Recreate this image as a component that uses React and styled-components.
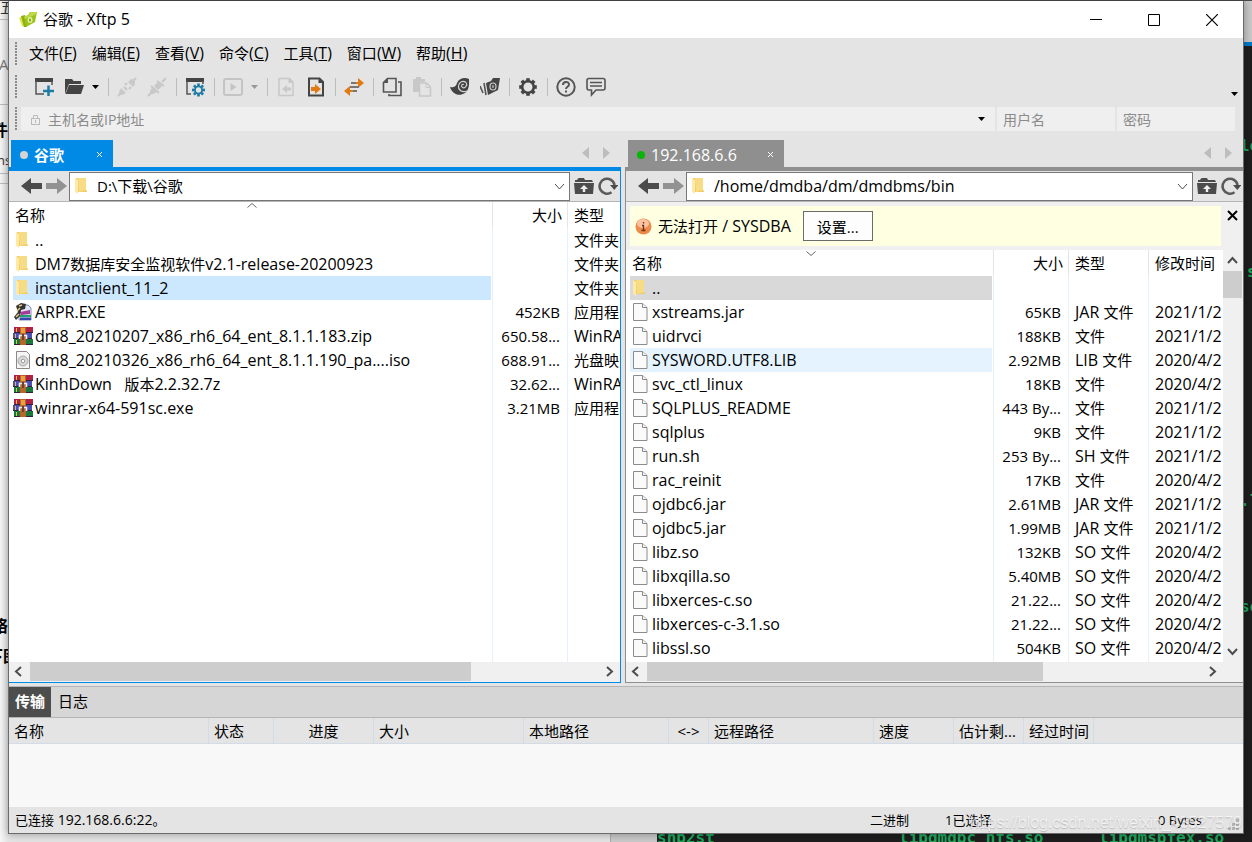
import React from "react";
import styled, { createGlobalStyle } from "styled-components";

const Global = createGlobalStyle`
  * { box-sizing: border-box; }
  body { margin: 0; font-family: "Open Sans", "Noto Sans CJK SC", sans-serif; font-size: 15px; color: #000; }
  button, input, select { font: inherit; color: inherit; border: 0; padding: 0; margin: 0; background: none; border-radius: 0; }
  svg { display: block; flex: none; }
`;

/* ---------- desktop behind the window ---------- */
const Desktop = styled.div`
  position: relative;
  height: 100vh;
  min-height: 600px;
  padding: 1px 8px 8px;
  overflow: hidden;
  background: #1e1e1e;
  isolation: isolate;
`;
const Backdrop = styled.div`
  position: absolute;
  inset: 0;
  z-index: -1;
  overflow: hidden;
`;
const Page = styled.div`
  position: absolute;
  inset: 0 auto 0 0;
  width: 610px;
  background: linear-gradient(90deg, #f6f6f6, #e4e4e4 8px);
  border-top: 1px solid #55555a;
`;
const PageEdge = styled.div`
  position: absolute;
  inset: 0 auto 0 610px;
  width: 47px;
  background: #c9c9c9;
  border-left: 1px solid #aaa;
`;
const TopStrip = styled.div`
  position: absolute;
  inset: 0 0 auto 0;
  height: 1px;
  background: #4d4b50;
`;
const CornerWindow = styled.div`
  position: absolute;
  right: 0;
  top: 1px;
  width: 9px;
  height: 45px;
  background: #c8c8c8;
  border-bottom: 4px solid #0078c8;
`;
const Scrap = styled.span`
  position: absolute;
  white-space: nowrap;
  line-height: 20px;
  left: ${(p) => p.$x}px;
  top: ${(p) => p.$y}px;
  font-size: ${(p) => p.$size || 15}px;
  font-weight: ${(p) => (p.$bold ? 700 : 400)};
  color: ${(p) => p.$color || "#333"};
`;
const Rule = styled.div`
  position: absolute;
  left: 0;
  top: ${(p) => p.$y}px;
  width: 8px;
  height: 1px;
  background: #bbb;
`;
const Term = styled.span`
  position: absolute;
  white-space: nowrap;
  font: 700 16px/20px "DejaVu Sans Mono", monospace;
  color: #1ba85b;
  left: ${(p) => p.$x}px;
  ${(p) => (p.$y ? `top: ${p.$y}px;` : "bottom: -6px;")}
`;

/* ---------- window frame ---------- */
const Window = styled.main`
  position: relative;
  display: flex;
  flex-direction: column;
  height: 100%;
  background: #e4e4e4;
  border: 1px solid #6b6b6b;
  border-top: 0;
  box-shadow: 0 0 8px rgba(0, 0, 0, 0.35);
`;
const Latin = styled.span`
  font-size: ${(p) => p.$size}px;
`;
const TitleBar = styled.header`
  display: flex;
  align-items: center;
  height: 37px;
  background: #fff;
  padding: 0 2px 0 10px;
`;
const Title = styled.h1`
  flex: 1;
  margin: 0 0 0 6px;
  font-size: 15px;
  font-weight: 400;
  line-height: 37px;
`;
const CaptionButton = styled.button`
  display: flex;
  align-items: center;
  justify-content: center;
  width: 58px;
  height: 36px;
`;
const Bar = styled.div`
  display: flex;
  align-items: center;
  height: ${(p) => p.$h}px;
  padding: 0 ${(p) => p.$end || 0}px 0 6px;
`;
const Grip = styled.span`
  width: 2px;
  height: 24px;
  background: repeating-linear-gradient(180deg, #8a8a8a 0 2px, transparent 2px 3px);
`;
const Menus = styled.nav`
  display: flex;
  gap: 15px;
  margin-left: 12px;
`;
const MenuButton = styled.button`
  line-height: 24px;
  padding-bottom: 2px;
`;
const Tools = styled.div`
  display: flex;
  align-items: center;
  gap: 10px;
  margin-left: 17px;
  flex: 1;
`;
const ToolButton = styled.button`
  display: flex;
  align-items: center;
  gap: 8px;
  height: 22px;
`;
const Separator = styled.span`
  width: 1px;
  height: 18px;
  margin: 0 -2px 0 -1px;
  background: #bcbcbc;
`;
const Overflow = styled.button`
  align-self: flex-end;
  padding: 0 5px 8px 0;
`;
const Field = styled.label`
  display: flex;
  align-items: center;
  height: 24px;
  background: #efefef;
  ${(p) => (p.$w ? `width: ${p.$w}px;` : "flex: 1;")}
  margin-left: ${(p) => (p.$w ? 2 : 4)}px;
  padding: 0 ${(p) => (p.$w ? 6 : 10)}px;
  gap: 8px;
`;
const FieldInput = styled.input`
  flex: 1;
  min-width: 0;
  width: 0;
  height: 24px;
  font-size: 14px;
  outline: 0;
  &::placeholder { color: #8b8b8b; opacity: 1; }
`;

/* ---------- file panels ---------- */
const Panels = styled.div`
  display: grid;
  grid-template-columns: minmax(0, 612fr) minmax(0, 618fr);
  gap: 4px;
  flex: 1;
  min-height: 0;
  margin-top: 6px;
`;
const Panel = styled.section`
  display: flex;
  flex-direction: column;
  min-height: 0;
`;
const TabStrip = styled.div`
  display: flex;
  align-items: flex-end;
  height: 27px;
  padding-left: ${(p) => p.$indent}px;
`;
const Tab = styled.button`
  display: flex;
  align-items: center;
  width: ${(p) => p.$w}px;
  height: 27px;
  padding: 2px 10px 0 9px;
  gap: 6px;
  color: #fff;
  background: ${(p) => p.$tone};
  font-size: ${(p) => (p.$bold ? 15 : 16)}px;
  font-weight: ${(p) => (p.$bold ? 700 : 400)};
`;
const Dot = styled.i`
  width: 8px;
  height: 8px;
  border-radius: 50%;
  background: ${(p) => p.$c};
`;
const TabName = styled.span`
  flex: 1;
  line-height: 22px;
  text-align: left;
`;
const TabScroll = styled.div`
  display: flex;
  gap: 14px;
  margin: 0 11px 8px auto;
`;
const PanelBody = styled.div`
  display: flex;
  flex-direction: column;
  flex: 1;
  min-height: 0;
  border: solid ${(p) => p.$tone};
  border-width: 4px ${(p) => (p.$active ? 1 : 0)}px 1px ${(p) => (p.$active ? 0 : 1)}px;
`;
const PathBar = styled.div`
  display: flex;
  align-items: center;
  height: 31px;
  padding: 0 2px 0 12px;
  gap: 4px;
  border-bottom: 1px solid #b5b5b5;
`;
const PathBox = styled.label`
  position: relative;
  display: flex;
  align-items: center;
  flex: 1;
  height: 29px;
  background: #fff;
  border: 1px solid #767676;
  margin-left: -2px;
  svg { position: absolute; pointer-events: none; }
  svg:first-child { left: 2px; }
  svg:last-child { right: 3px; }
`;
const PathSelect = styled.select`
  appearance: none;
  width: 100%;
  height: 27px;
  padding-left: 27px;
  font-size: ${(p) => p.$size}px;
  outline: 0;
`;
const IconButton = styled.button`
  display: flex;
`;
const Notice = styled.div`
  display: flex;
  align-items: flex-start;
  gap: 6px;
  height: 48px;
  padding: 4px 5px 4px 4px;
  background: #f0f0f0;
`;
const NoticeClose = styled.button`
  padding-top: 4px;
`;
const NoticeText = styled.div`
  display: flex;
  align-items: center;
  flex: 1;
  height: 40px;
  padding-left: 5px;
  gap: 6px;
  background: #ffffe1;
`;
const SettingsButton = styled.button`
  width: 70px;
  height: 30px;
  margin-left: 6px;
  border: 1px solid #6b6b6b;
  background: #fdfdfd;
`;
const ListArea = styled.div`
  display: flex;
  flex: 1;
  min-height: 0;
  background: #fff;
`;
const ListClip = styled.div`
  flex: 1;
  min-width: 0;
  overflow: hidden;
  padding-left: 4px;
`;
const FileTable = styled.table`
  width: 100%;
  height: 100%;
  table-layout: fixed;
  border-collapse: separate;
  border-spacing: 0;
`;
const Th = styled.th`
  position: relative;
  width: ${(p) => (p.$w ? `${p.$w}px` : "auto")};
  height: 26px;
  padding: 0 5px 0 ${(p) => (p.$w ? 6 : 2)}px;
  font-weight: 400;
  line-height: 24px;
  text-align: ${(p) => (p.$right ? "right" : "left")};
  white-space: nowrap;
  border-left: ${(p) => (p.$w ? "1px solid #e5e5e5" : "0")};
`;
const SortMark = styled.span`
  position: absolute;
  left: 50%;
  top: 1px;
  margin-left: -6px;
`;
const rowTone = { selected: "#cce8ff", idle: "#d9d9d9", hover: "#e5f3ff" };
const Td = styled.td`
  height: ${(p) => (p.$fill ? "auto" : "24px")};
  padding: 0 ${(p) => (p.$right ? 7 : 0)}px 0 6px;
  line-height: 24px;
  text-align: ${(p) => (p.$right ? "right" : "left")};
  white-space: pre;
  overflow: hidden;
  border-left: 1px solid #e6f0fb;
`;
const NameTd = styled.td`
  height: ${(p) => (p.$fill ? "auto" : "24px")};
  padding: 0 1px 0 0;
`;
const NameBox = styled.div`
  display: flex;
  align-items: center;
  gap: 2px;
  height: 24px;
  line-height: 24px;
  white-space: pre;
  background: ${(p) => rowTone[p.$state] || "transparent"};
`;
const HScroll = styled.div`
  display: grid;
  grid-template-columns: 21px ${(p) => p.$thumb}fr ${(p) => p.$rest}fr 21px ${(p) => p.$corner || 0}px;
  align-items: center;
  justify-items: center;
  height: 20px;
  padding-bottom: 1px;
  background: #f0f0f0;
`;
const VScroll = styled.div`
  display: flex;
  flex-direction: column;
  align-items: center;
  width: 20px;
  padding-right: 1px;
  background: #f0f0f0;
`;
const Thumb = styled.div`
  width: 100%;
  height: ${(p) => (p.$h ? `${p.$h}px` : "100%")};
  background: #cdcdcd;
`;
const VArrow = styled.button`
  display: flex;
  align-items: center;
  justify-content: center;
  width: 19px;
  height: 21px;
  margin-top: ${(p) => (p.$last ? "auto" : 0)};
`;

/* ---------- transfer pane and status ---------- */
const BottomTabs = styled.div`
  display: flex;
  height: 32px;
  margin-top: 3px;
  background: #d6d6d6;
  border: solid #b5b5b5;
  border-width: 1px 0;
`;
const BottomTab = styled.button`
  padding: 0 ${(p) => (p.$on ? 6 : 7)}px 3px;
  color: ${(p) => (p.$on ? "#fff" : "#000")};
  background: ${(p) => (p.$on ? "#4d4d4d" : "transparent")};
  font-weight: ${(p) => (p.$on ? 700 : 400)};
`;
const TransferArea = styled.div`
  height: 89px;
  background: #f8f8f8;
`;
const TransferTable = styled.table`
  width: 100%;
  table-layout: fixed;
  border-collapse: separate;
  border-spacing: 0;
  background: #e4e4e4;
`;
const TransferTh = styled.th`
  width: ${(p) => (p.$w ? `${p.$w}px` : "auto")};
  height: 26px;
  padding: 1px 0 0 ${(p) => (p.$center ? 0 : 5)}px;
  font-weight: 400;
  line-height: 24px;
  white-space: nowrap;
  text-align: ${(p) => (p.$center ? "center" : "left")};
  border-bottom: 1px solid #d3dbe6;
  border-right: ${(p) => (p.$w ? "1px solid #d3dbe6" : "0")};
`;
const StatusBar = styled.footer`
  display: grid;
  grid-template-columns: minmax(0, 1fr) 75px 213px 85px;
  height: 26px;
  padding-left: 6px;
  font-size: 13px;
  line-height: 26px;
`;
const ResizeGrip = styled.span`
  position: absolute;
  right: 4px;
  bottom: 3px;
`;
const Watermark = styled.span`
  position: absolute;
  right: 1px;
  bottom: 0;
  font: 16px/20px "Liberation Sans", sans-serif;
  color: rgba(255, 255, 255, 0.7);
  text-shadow: 0 1px 1px rgba(120, 120, 120, 0.4);
  pointer-events: none;
`;

/* ---------- icons ---------- */
const Svg = ({ w = 20, h = w, children }) => (
  <svg width={w} height={h} viewBox={`0 0 ${w} ${h}`} fill="none" aria-hidden="true">{children}</svg>
);
const Chevron = ({ d, c = "#4d4d4d", sw = 2 }) => {
  const paths = { left: "M8 2 3 6.500 8 11", right: "M4 2 9 6.500 4 11", up: "M2 9 6.500 4 11 9", down: "M2 4 6.500 9 11 4" };
  return <Svg w={13}><path d={paths[d]} stroke={c} strokeWidth={sw} /></Svg>;
};
const Triangle = ({ c = "#000" }) => <Svg w={7} h={4}><path d="M0 0H7L3.500 4Z" fill={c} /></Svg>;
const SideTriangle = ({ left }) => <Svg w={7} h={12}><path d={left ? "M7 0V12L0 6Z" : "M0 0V12L7 6Z"} fill="#bdbdbd" /></Svg>;
const AppIcon = () => (
  <Svg w={18} h={18}>
    <path d="M0 7 4 5 6 16 3 15Z" fill="#d8e84a" />
    <path d="M2 5 6 4 8 16 5 16Z" fill="#8fae10" />
    <path d="M5 6 9 4 11 1 18 1 16 11 7 16Z" fill="#9bc21a" />
    <path d="M5 6 9 4 11 1 18 1 16 4 6 8Z" fill="#bcd84a" />
    <ellipse cx="11" cy="9" rx="2.500" ry="3" fill="#e2efa0" />
    <ellipse cx="11" cy="9" rx="1" ry="1.500" fill="#7fa50d" />
  </Svg>
);
const NewIcon = () => (
  <Svg><path d="M1 1H19V5H1Z" fill="#444" /><path d="M2 4V17H10M18 4V8" stroke="#555" strokeWidth="1.500" /><path d="M14.500 8.500V19M9 14H20" stroke="#1d7ba5" strokeWidth="2.500" /></Svg>
);
const OpenIcon = () => (
  <Svg><path d="M1 17V2H8L9.500 4H17V7H5Z" fill="#444" /><path d="M5 8H20L17 17H1.500Z" fill="#444" /></Svg>
);
const PlugIcon = ({ joined }) => (
  <Svg>
    {joined
      ? <><path d="M1 19 5 15M15 5 19 1M10 4 17 9M4 9 12 16" stroke="#c8c8c8" strokeWidth="2" /><path d="M5 11 10 15 6 17 3 17 3 14ZM7 9 11 13 15 9 11 5Z" fill="#c8c8c8" /></>
      : <><path d="M1 19 4 16M16 4 19 1M7 10 10 13M8 8 10 6M12 12 14 10" stroke="#c9c9c9" strokeWidth="2" /><path d="M4 11 9 16 5 18 2 18 2 15ZM11 5 16 10 18 7 18 3 14 2Z" fill="#c9c9c9" /></>}
  </Svg>
);
const Gear = ({ cx, cy, r, c, sw }) => (
  <g stroke={c} strokeWidth={sw}>
    <circle cx={cx} cy={cy} r={r} />
    {[0, 45, 90, 135, 180, 225, 270, 315].map((a) => (
      <path key={a} d={`M${cx} ${cy - r}V${cy - r - 3}`} strokeWidth={sw + 1} transform={`rotate(${a} ${cx} ${cy})`} />
    ))}
  </g>
);
const PropsIcon = () => (
  <Svg><path d="M1 1H19V5H1Z" fill="#444" /><path d="M2 4V17H6M18 4V7" stroke="#555" strokeWidth="1.500" /><Gear cx={13.5} cy={13} r={3.5} c="#1d7ba5" sw={1.7} /></Svg>
);
const PlayIcon = () => (
  <Svg><rect x="1" y="2" width="18" height="16" rx="2" stroke="#c4c4c4" strokeWidth="2" /><path d="M7.500 6V14L13.500 10Z" fill="#c4c4c4" /></Svg>
);
const SendIcon = ({ on }) => {
  const c = on ? "#444" : "#c8c8c8";
  return (
    <Svg>
      <path d="M3 1.500H13.500L17 5V18.500H3Z" stroke={c} strokeWidth={on ? 2 : 1.500} /><path d="M12.500 1V6H17Z" fill={c} />
      {on ? <path d="M5 10H9V7L15 12 9 17V14H5Z" fill="#e27a12" /> : <path d="M15 10.500H11V8L6 12 11 16V13.500H15Z" fill={c} />}
    </Svg>
  );
};
const SwapIcon = () => (
  <Svg><path d="M14 1 20 6 14 11ZM6 9 0 14 6 19Z" fill="#e27a12" /><path d="M7 6H14M6 10H15M6 14H13" stroke="#777" strokeWidth="2" /><path d="M6 14H9M12 6H15" stroke="#e27a12" strokeWidth="2" /></Svg>
);
const CopyIcon = () => (
  <Svg><path d="M5.500 1.500H14V15H1.500V5.500Z" stroke="#555" strokeWidth="1.600" /><path d="M1 6 6 1V6Z" fill="#555" /><path d="M16 5H19V18.500H7V17" stroke="#555" strokeWidth="1.600" /></Svg>
);
const PasteIcon = () => (
  <Svg><path d="M1 2H4V0H9V2H13V5H7V15H1Z" fill="#c8c8c8" /><path d="M7.500 6H14.500L18.500 10V19H7.500Z" stroke="#c8c8c8" strokeWidth="1.600" /><path d="M14 6V10.500H18" stroke="#c8c8c8" /></Svg>
);
const ShellIcon = () => (
  <Svg>
    <path d="M0 10C3 11 6 10 7 6C9 1 15 0 19 2C19 6 20 12 15 16C9 20 2 17 0 10Z" fill="#444" />
    <path d="M17 14C12 16 8 13 8.500 9C9 5 13 3 16 5.500C18 8 15 12 12.500 10.500C10.500 9 12 6.500 14 7.500" stroke="#d5d5d5" strokeWidth="1.100" />
  </Svg>
);
const XftpIcon = () => (
  <Svg><path d="M6 6 11 4 13 1H20L18 13 8 18Z" fill="#444" /><path d="M0 9 3 16M4 6 6 18" stroke="#555" strokeWidth="1.600" /><ellipse cx="13" cy="9.500" rx="3" ry="3.500" stroke="#ccc" strokeWidth="1.200" /><path d="M13 8V11" stroke="#ddd" /></Svg>
);
const OptionsIcon = () => <Svg><Gear cx={10} cy={10} r={5.8} c="#444" sw={2.6} /></Svg>;
const HelpIcon = () => (
  <Svg><circle cx="10" cy="10" r="8.700" stroke="#555" strokeWidth="2" /><path d="M7 8C7 4 13 4 13 7.500C13 10 10 9.500 10 12M10 13.500V15.500" stroke="#555" strokeWidth="2" /></Svg>
);
const TalkIcon = () => (
  <Svg><path d="M3 1.500H17Q19 1.500 19 3.500V11Q19 13 17 13H10L5.500 18V13H3Q1 13 1 11V3.500Q1 1.500 3 1.500Z" stroke="#555" strokeWidth="1.600" /><path d="M4 5.500H16M4 9H16" stroke="#555" strokeWidth="1.600" /></Svg>
);
const LockIcon = () => (
  <Svg w={9} h={11}><rect x="0.500" y="4.500" width="8" height="6" stroke="#bbb" /><path d="M2.500 4V1.500H6.500V4M4.500 6V9" stroke="#bbb" /></Svg>
);
const BackIcon = ({ forward }) => (
  <Svg w={21} h={18}><path d={forward ? "M0 6H11V1L21 9 11 17V12H0Z" : "M21 6H10V1L0 9 10 17V12H21Z"} fill={forward ? "#929292" : "#4b4b4b"} /></Svg>
);
const UpFolderIcon = () => (
  <Svg w={20} h={18}><path d="M1 4V3H3Q4 1 5 1H10L11 3H18L19 5H1ZM0 6H20L19 17H1Z" fill="#4b4b4b" /><path d="M10 8 6 12H8.800V15H11.200V12H14Z" fill="#eee" /></Svg>
);
const RefreshIcon = () => (
  <Svg><path d="M13.500 16.300A7.500 7.500 0 1 1 16.500 9" stroke="#5a5a5a" strokeWidth="2.600" /><path d="M12 9H20.500L16.300 14Z" fill="#4b4b4b" /></Svg>
);
const FolderIcon = () => (
  <Svg><path d="M4 2H14V14L15 15V16H4Z" fill="#f0cd67" /><path d="M6 2H14V14L7 16Z" fill="#f8dc85" /><path d="M3 2 6 4V18L3 16Z" fill="#ffe9a6" /></Svg>
);
const FileIcon = () => (
  <Svg><path d="M3.500 1.500H12.500L17 5.500V18.500H3.500Z" fill="#fafafa" stroke="#8c8c8c" /><path d="M12.500 1.500V5.500H17" stroke="#8c8c8c" fill="#eee" /></Svg>
);
const DiscIcon = () => (
  <Svg><path d="M3.500 1.500H13.500L16.500 4.500V18.500H3.500Z" fill="#f5f5f5" stroke="#888" /><circle cx="10" cy="11" r="5" fill="#d8d8d8" stroke="#aaa" /><circle cx="10" cy="11" r="1.800" fill="#fff" stroke="#999" /></Svg>
);
const RarIcon = () => (
  <Svg>
    <path d="M1 1H20V7H1Z" fill="#b32045" /><path d="M0 7H19V13H0Z" fill="#4a4fb0" /><path d="M1 13H20V19H1Z" fill="#17773c" />
    <path d="M1 6.500H20M0 12.500H19M1 18.500H20" stroke="#33203a" />
    <path d="M3.500 2V6M2.500 8V12M3.500 14V18" stroke="#e2c13c" />
    <path d="M7 1H13V19H7Z" fill="#b9652a" /><path d="M8 2H12V7H8Z" fill="#e8a33b" /><path d="M6.500 13V9.500H13.500V13" stroke="#eee" strokeWidth="1.600" /><path d="M10 8V14" stroke="#643" strokeWidth="2" />
  </Svg>
);
const ArprIcon = () => (
  <Svg>
    <path d="M9 3H15L18 6V18H6V12Z" fill="#dfe6f5" stroke="#8090b0" /><path d="M7 10 17 8V12L8 13Z" fill="#a43a9a" /><path d="M7 13H18V15H7Z" fill="#1fa06a" /><path d="M7 15.500H18V18H7Z" fill="#3448b0" />
    <path d="M3 4 8 1 13 2 12 7 8 8 7 14 3 18 1 15 5 10Z" fill="#333" /><path d="M6 4 9 3M4 9 7 6M3 15 6 12" stroke="#e6c778" strokeWidth="1.500" />
  </Svg>
);
const InfoIcon = () => (
  <Svg w={17}><circle cx="8.500" cy="8.500" r="8" fill="#ee8a4a" /><ellipse cx="8" cy="5.500" rx="6" ry="4.500" fill="#fbc3a0" /><path d="M7 7.500H8.500V12M6.500 12.500H10.500M8.500 4V5.500" stroke="#6b3414" strokeWidth="1.300" /></Svg>
);
const SmallX = ({ c, w = 7, sw = 1 }) => <Svg w={w}><path d={`M1 1 ${w - 1} ${w - 1}M${w - 1} 1 1 ${w - 1}`} stroke={c} strokeWidth={sw} /></Svg>;

const icons = { folder: FolderIcon, file: FileIcon, disc: DiscIcon, rar: RarIcon, arpr: ArprIcon };

/* Latin runs are set one step larger than the Chinese text beside them. */
function Mixed({ children, size = 16 }) {
  const runs = children.split(/([\x20-\x7e]+)/).filter(Boolean);
  return (
    <span>
      {runs.map((run, i) => (/^[\x20-\x7e]/.test(run) ? <Latin key={i} $size={size}>{run}</Latin> : run))}
    </span>
  );
}

/* ---------- data ---------- */
const menus = [["文件", "F"], ["编辑", "E"], ["查看", "V"], ["命令", "C"], ["工具", "T"], ["窗口", "W"], ["帮助", "H"]];
const tools = [
  ["新建", <NewIcon />], ["打开", <><OpenIcon /><Triangle /></>], null,
  ["断开", <PlugIcon />], ["重新连接", <PlugIcon joined />], null,
  ["属性", <PropsIcon />], null,
  ["执行", <><PlayIcon /><Triangle c="#999" /></>], null,
  ["向左传输", <SendIcon />], ["向右传输", <SendIcon on />], null,
  ["同步", <SwapIcon />], null,
  ["复制", <CopyIcon />], ["粘贴", <PasteIcon />], null,
  ["Xshell", <ShellIcon />], ["Xftp", <XftpIcon />], null,
  ["选项", <OptionsIcon />], null,
  ["帮助主题", <HelpIcon />], ["反馈", <TalkIcon />],
];
const localFiles = [
  ["folder", "..", "", "文件夹"],
  ["folder", "DM7数据库安全监视软件v2.1-release-20200923", "", "文件夹"],
  ["folder", "instantclient_11_2", "", "文件夹", "selected"],
  ["arpr", "ARPR.EXE", "452KB", "应用程"],
  ["rar", "dm8_20210207_x86_rh6_64_ent_8.1.1.183.zip", "650.58...", "WinRA"],
  ["disc", "dm8_20210326_x86_rh6_64_ent_8.1.1.190_pa....iso", "688.91...", "光盘映"],
  ["rar", "KinhDown   版本2.2.32.7z", "32.62...", "WinRA"],
  ["rar", "winrar-x64-591sc.exe", "3.21MB", "应用程"],
];
const remoteFiles = [
  ["folder", "..", "", "", "idle", ""],
  ["file", "xstreams.jar", "65KB", "JAR 文件", "", "2021/1/2"],
  ["file", "uidrvci", "188KB", "文件", "", "2021/1/2"],
  ["file", "SYSWORD.UTF8.LIB", "2.92MB", "LIB 文件", "hover", "2020/4/2"],
  ["file", "svc_ctl_linux", "18KB", "文件", "", "2020/4/2"],
  ["file", "SQLPLUS_README", "443 By...", "文件", "", "2021/1/2"],
  ["file", "sqlplus", "9KB", "文件", "", "2021/1/2"],
  ["file", "run.sh", "253 By...", "SH 文件", "", "2021/1/2"],
  ["file", "rac_reinit", "17KB", "文件", "", "2020/4/2"],
  ["file", "ojdbc6.jar", "2.61MB", "JAR 文件", "", "2021/1/2"],
  ["file", "ojdbc5.jar", "1.99MB", "JAR 文件", "", "2021/1/2"],
  ["file", "libz.so", "132KB", "SO 文件", "", "2020/4/2"],
  ["file", "libxqilla.so", "5.40MB", "SO 文件", "", "2020/4/2"],
  ["file", "libxerces-c.so", "21.22...", "SO 文件", "", "2020/4/2"],
  ["file", "libxerces-c-3.1.so", "21.22...", "SO 文件", "", "2020/4/2"],
  ["file", "libssl.so", "504KB", "SO 文件", "", "2020/4/2"],
];
const transferColumns = [["名称", 200], ["状态", 65], ["进度", 100, true], ["大小", 150], ["本地路径", 145], ["<->", 40, true], ["远程路径", 165], ["速度", 80], ["估计剩...", 70], ["经过时间", 70], ["", 0]];

/* ---------- composed parts ---------- */
function FileList({ files, sort, typeWidth, dated }) {
  return (
    <ListClip>
      <FileTable>
        <thead>
          <tr>
            <Th>名称<SortMark><Svg w={10} h={5}><path d={sort === "up" ? "M0.500 4.500 5 0.500 9.500 4.500" : "M0.500 0.500 5 4.500 9.500 0.500"} stroke="#666" /></Svg></SortMark></Th>
            <Th $w={75} $right>大小</Th>
            <Th $w={typeWidth}>类型</Th>
            {dated && <Th $w={75}>修改时间</Th>}
          </tr>
        </thead>
        <tbody>
          {files.map(([kind, name, size, type, state, date]) => {
            const Icon = icons[kind];
            return (
              <tr key={name}>
                <NameTd><NameBox $state={state}><Icon /><Mixed>{name}</Mixed></NameBox></NameTd>
                <Td $right>{size}</Td>
                <Td><Mixed>{type}</Mixed></Td>
                {dated && <Td><Mixed>{date}</Mixed></Td>}
              </tr>
            );
          })}
          <tr><NameTd $fill /><Td $fill /><Td $fill />{dated && <Td $fill />}</tr>
        </tbody>
      </FileTable>
    </ListClip>
  );
}

function PanelTop({ tone, dot, name, width, bold, indent }) {
  return (
    <TabStrip $indent={indent}>
      <Tab $tone={tone} $w={width} $bold={bold}><Dot $c={dot} /><TabName>{name}</TabName><SmallX c="#fff" /></Tab>
      <TabScroll><SideTriangle left /><SideTriangle /></TabScroll>
    </TabStrip>
  );
}

function Path({ value, label, size }) {
  return (
    <PathBar>
      <IconButton aria-label="后退"><BackIcon /></IconButton>
      <IconButton aria-label="前进"><BackIcon forward /></IconButton>
      <PathBox>
        <FolderIcon />
        <PathSelect aria-label={label} $size={size}><option>{value}</option></PathSelect>
        <Chevron d="down" sw={1} />
      </PathBox>
      <IconButton aria-label="上级目录"><UpFolderIcon /></IconButton>
      <IconButton aria-label="刷新"><RefreshIcon /></IconButton>
    </PathBar>
  );
}

export default function App() {
  return (
    <Desktop>
      <Global />
      <Backdrop aria-hidden="true">
        <Page />
        <PageEdge />
        <TopStrip />
        <CornerWindow />
        <Scrap $x={0} $y={-3}>五</Scrap>
        <Scrap $x={-1} $y={54} $color="#777">A</Scrap>
        <Scrap $x={-8} $y={120} $size={16} $bold $color="#000">件</Scrap>
        <Scrap $x={-3} $y={150} $size={13}>ns</Scrap>
        <Scrap $x={-8} $y={616} $size={16} $bold $color="#000">络</Scrap>
        <Scrap $x={-13} $y={646} $size={16} $bold $color="#000">下图</Scrap>
        {[711, 728, 745, 762].map((y) => <Scrap key={y} $x={-5} $y={y} $size={13} $color="#999">1</Scrap>)}
        {[19, 104, 173, 183].map((y) => <Rule key={y} $y={y} />)}
        <Term $x={1240} $y={136}>le</Term>
        <Term $x={1247} $y={262}>s</Term>
        <Term $x={1240} $y={491}>.l</Term>
        <Term $x={1240} $y={597}>so</Term>
        <Term $x={657}>shp2st</Term>
        <Term $x={899}>libdmdpc_nfs.so</Term>
        <Term $x={1099}>libdmsbfex.so</Term>
      </Backdrop>

      <Window>
        <TitleBar>
          <AppIcon />
          <Title><Mixed>谷歌 - Xftp 5</Mixed></Title>
          <CaptionButton aria-label="最小化"><Svg w={12}><path d="M0 5.500H12" stroke="#000" /></Svg></CaptionButton>
          <CaptionButton aria-label="最大化"><Svg w={12}><path d="M0.500 0.500H11.500V11.500H0.500Z" stroke="#000" /></Svg></CaptionButton>
          <CaptionButton aria-label="关闭"><Svg w={12}><path d="M0 0 12 12M12 0 0 12" stroke="#000" strokeWidth="1.200" /></Svg></CaptionButton>
        </TitleBar>

        <Bar $h={32}>
          <Grip />
          <Menus>{menus.map(([t, k]) => <MenuButton key={k}>{t}<Latin $size={16}>(<u>{k}</u>)</Latin></MenuButton>)}</Menus>
        </Bar>
        <Bar $h={34}>
          <Grip />
          <Tools>
            {tools.map((t, i) => (t ? <ToolButton key={i} aria-label={t[0]}>{t[1]}</ToolButton> : <Separator key={i} />))}
          </Tools>
          <Overflow aria-label="更多"><Triangle /></Overflow>
        </Bar>
        <Bar $h={30} $end={8}>
          <Grip />
          <Field>
            <LockIcon />
            <FieldInput aria-label="主机" placeholder="主机名或IP地址" />
            <Triangle />
          </Field>
          <Field $w={118}><FieldInput aria-label="用户名" placeholder="用户名" /></Field>
          <Field $w={118}><FieldInput aria-label="密码" type="password" placeholder="密码" /></Field>
        </Bar>

        <Panels>
          <Panel>
            <PanelTop tone="#008ae6" dot="#d4d4d4" name="谷歌" width={102} indent={2} bold />
            <PanelBody $tone="#008ae6" $active>
              <Path value="D:\下载\谷歌" label="本地路径" size={15} />
              <ListArea><FileList files={localFiles} sort="up" typeWidth={53} /></ListArea>
              <HScroll $thumb={441} $rest={128}>
                <Chevron d="left" /><Thumb /><span /><Chevron d="right" />
              </HScroll>
            </PanelBody>
          </Panel>
          <Panel>
            <PanelTop tone="#8f8f8f" dot="#0ab40a" name="192.168.6.6" width={156} indent={3} />
            <PanelBody $tone="#8f8f8f">
              <Path value="/home/dmdba/dm/dmdbms/bin" label="远程路径" size={16} />
              <Notice>
                <NoticeText><InfoIcon /><Mixed>无法打开 / SYSDBA</Mixed><SettingsButton>设置...</SettingsButton></NoticeText>
                <NoticeClose aria-label="关闭提示"><SmallX c="#000" w={11} sw={2} /></NoticeClose>
              </Notice>
              <ListArea>
                <FileList files={remoteFiles} sort="down" typeWidth={80} dated />
                <VScroll>
                  <VArrow aria-label="向上"><Chevron d="up" /></VArrow>
                  <Thumb $h={27} />
                  <VArrow aria-label="向下" $last><Chevron d="down" /></VArrow>
                </VScroll>
              </ListArea>
              <HScroll $thumb={396} $rest={159} $corner={20}>
                <Chevron d="left" /><Thumb /><span /><Chevron d="right" />
              </HScroll>
            </PanelBody>
          </Panel>
        </Panels>

        <BottomTabs>
          <BottomTab $on>传输</BottomTab>
          <BottomTab>日志</BottomTab>
        </BottomTabs>
        <TransferArea>
          <TransferTable>
            <thead><tr>{transferColumns.map(([t, w, c]) => <TransferTh key={t} $w={w} $center={c}>{t}</TransferTh>)}</tr></thead>
          </TransferTable>
        </TransferArea>
        <StatusBar>
          <Mixed size={14}>已连接 192.168.6.6:22。</Mixed>
          <span>二进制</span>
          <span>1已选择</span>
          <span>0 Bytes</span>
        </StatusBar>
        <ResizeGrip><Svg w={11}><path d="M8 0H11V3H8ZM4 4H7V7H4ZM8 4H11V7H8ZM0 8H3V11H0ZM4 8H7V11H4ZM8 8H11V11H8Z" fill="#b3b3b3" /></Svg></ResizeGrip>
        <Watermark>https://blog.csdn.net/weixin_43527579</Watermark>
      </Window>
    </Desktop>
  );
}
